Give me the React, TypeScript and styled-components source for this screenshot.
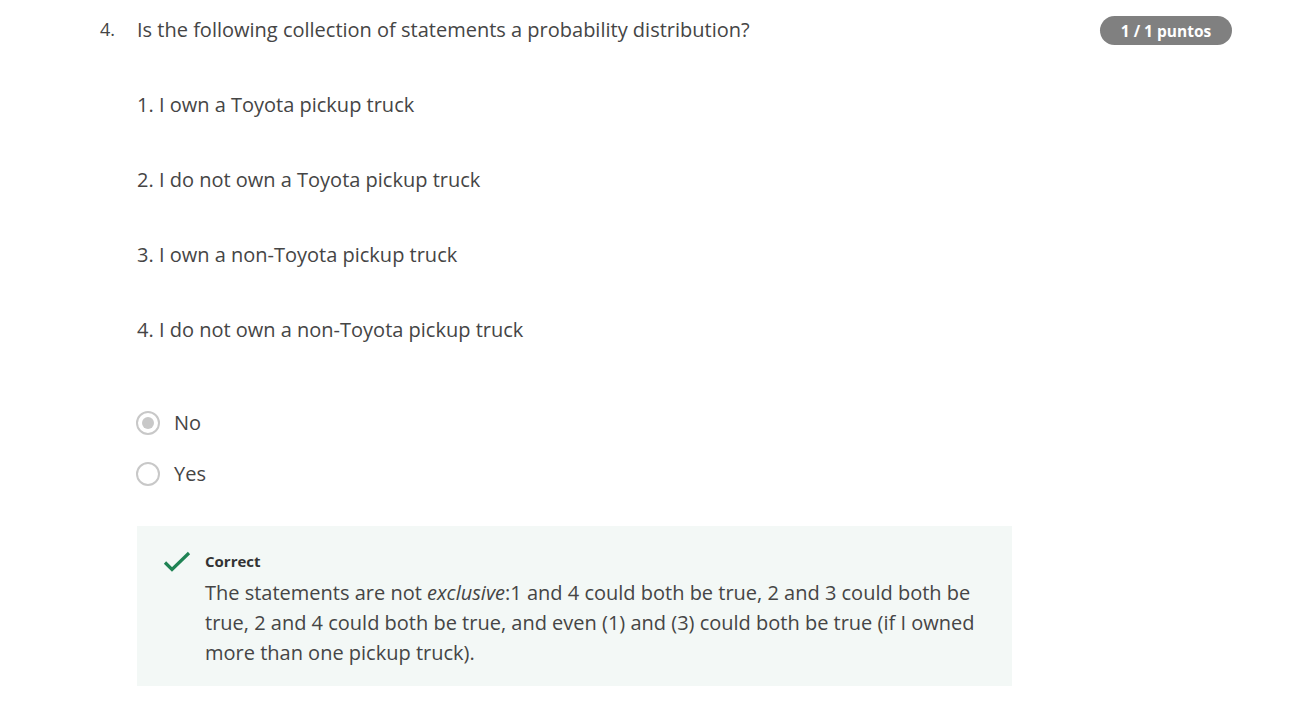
import React from "react";
import styled, { createGlobalStyle } from "styled-components";

const Global = createGlobalStyle`
  html, body { margin: 0; padding: 0; background: #fff; }
  body { font-family: "Open Sans", "Noto Sans", sans-serif; color: #454545; }
`;

const Page = styled.div`
  width: 1297px;
  height: 725px;
  box-sizing: border-box;
  padding: 14px 65px 0 100px;
  display: flex;
`;

const Num = styled.div`
  width: 37px;
  flex: none;
  font-size: 18px;
  line-height: 30px;
`;

const Body = styled.div`
  flex: 1;
  display: flex;
  flex-direction: column;
`;

const Head = styled.div`
  display: flex;
  justify-content: space-between;
  align-items: flex-start;
`;

const Question = styled.div`
  font-size: 20px;
  line-height: 32px;
`;

const Badge = styled.div`
  margin-top: 2px;
  width: 132px;
  height: 29px;
  border-radius: 15px;
  background: #808080;
  color: #fff;
  font-size: 15.5px;
  font-weight: 700;
  display: flex;
  align-items: center;
  justify-content: center;
`;

const Statements = styled.div`
  margin-top: 43px;
  display: flex;
  flex-direction: column;
  gap: 43px;
`;

const Statement = styled.div`
  font-size: 20px;
  line-height: 32px;
`;

const Options = styled.div`
  margin-top: 61px;
  display: flex;
  flex-direction: column;
  gap: 19px;
`;

const Option = styled.label`
  display: flex;
  align-items: center;
  gap: 14px;
  font-size: 20px;
  line-height: 32px;
  margin-left: -1px;
`;

const Radio = styled.span<{ $checked?: boolean }>`
  width: 24px;
  height: 24px;
  box-sizing: border-box;
  border-radius: 50%;
  border: 2px solid #c8c8c8;
  display: flex;
  align-items: center;
  justify-content: center;
  &::after {
    content: "";
    width: 12px;
    height: 12px;
    border-radius: 50%;
    background: ${(p) => (p.$checked ? "#c8c8c8" : "transparent")};
  }
`;

const Feedback = styled.div`
  margin-top: 36px;
  width: 875px;
  box-sizing: border-box;
  background: #f3f8f6;
  padding: 23px 24px 18px 26px;
  display: flex;
  gap: 14px;
`;

const IconWrap = styled.div`
  flex: none;
  padding-top: 2px;
`;

const FeedbackText = styled.div`
  display: flex;
  flex-direction: column;
`;

const Label = styled.div`
  font-size: 15px;
  font-weight: 700;
  color: #333;
  line-height: 24px;
  margin-bottom: 5px;
`;

const Explain = styled.div`
  font-size: 20px;
  line-height: 30px;
`;

export default function App() {
  return (
    <>
      <Global />
      <Page>
        <Num>4.</Num>
        <Body>
          <Head>
            <Question>Is the following collection of statements a probability distribution?</Question>
            <Badge>1 / 1 puntos</Badge>
          </Head>
          <Statements>
            <Statement>1. I own a Toyota pickup truck</Statement>
            <Statement>2. I do not own a Toyota pickup truck</Statement>
            <Statement>3. I own a non-Toyota pickup truck</Statement>
            <Statement>4. I do not own a non-Toyota pickup truck</Statement>
          </Statements>
          <Options>
            <Option>
              <Radio $checked />
              No
            </Option>
            <Option>
              <Radio />
              Yes
            </Option>
          </Options>
          <Feedback>
            <IconWrap>
              <svg width="28" height="22" viewBox="0 0 28 22">
                <path d="M2 11.5 L9 18.5 L26 2" fill="none" stroke="#1f8354" strokeWidth="3.2" />
              </svg>
            </IconWrap>
            <FeedbackText>
              <Label>Correct</Label>
              <Explain>
                The statements are not <em>exclusive</em>:1 and 4 could both be true, 2 and 3 could both be true, 2 and 4 could both be true, and even (1) and (3) could both be true (if I owned more than one pickup truck).
              </Explain>
            </FeedbackText>
          </Feedback>
        </Body>
      </Page>
    </>
  );
}
